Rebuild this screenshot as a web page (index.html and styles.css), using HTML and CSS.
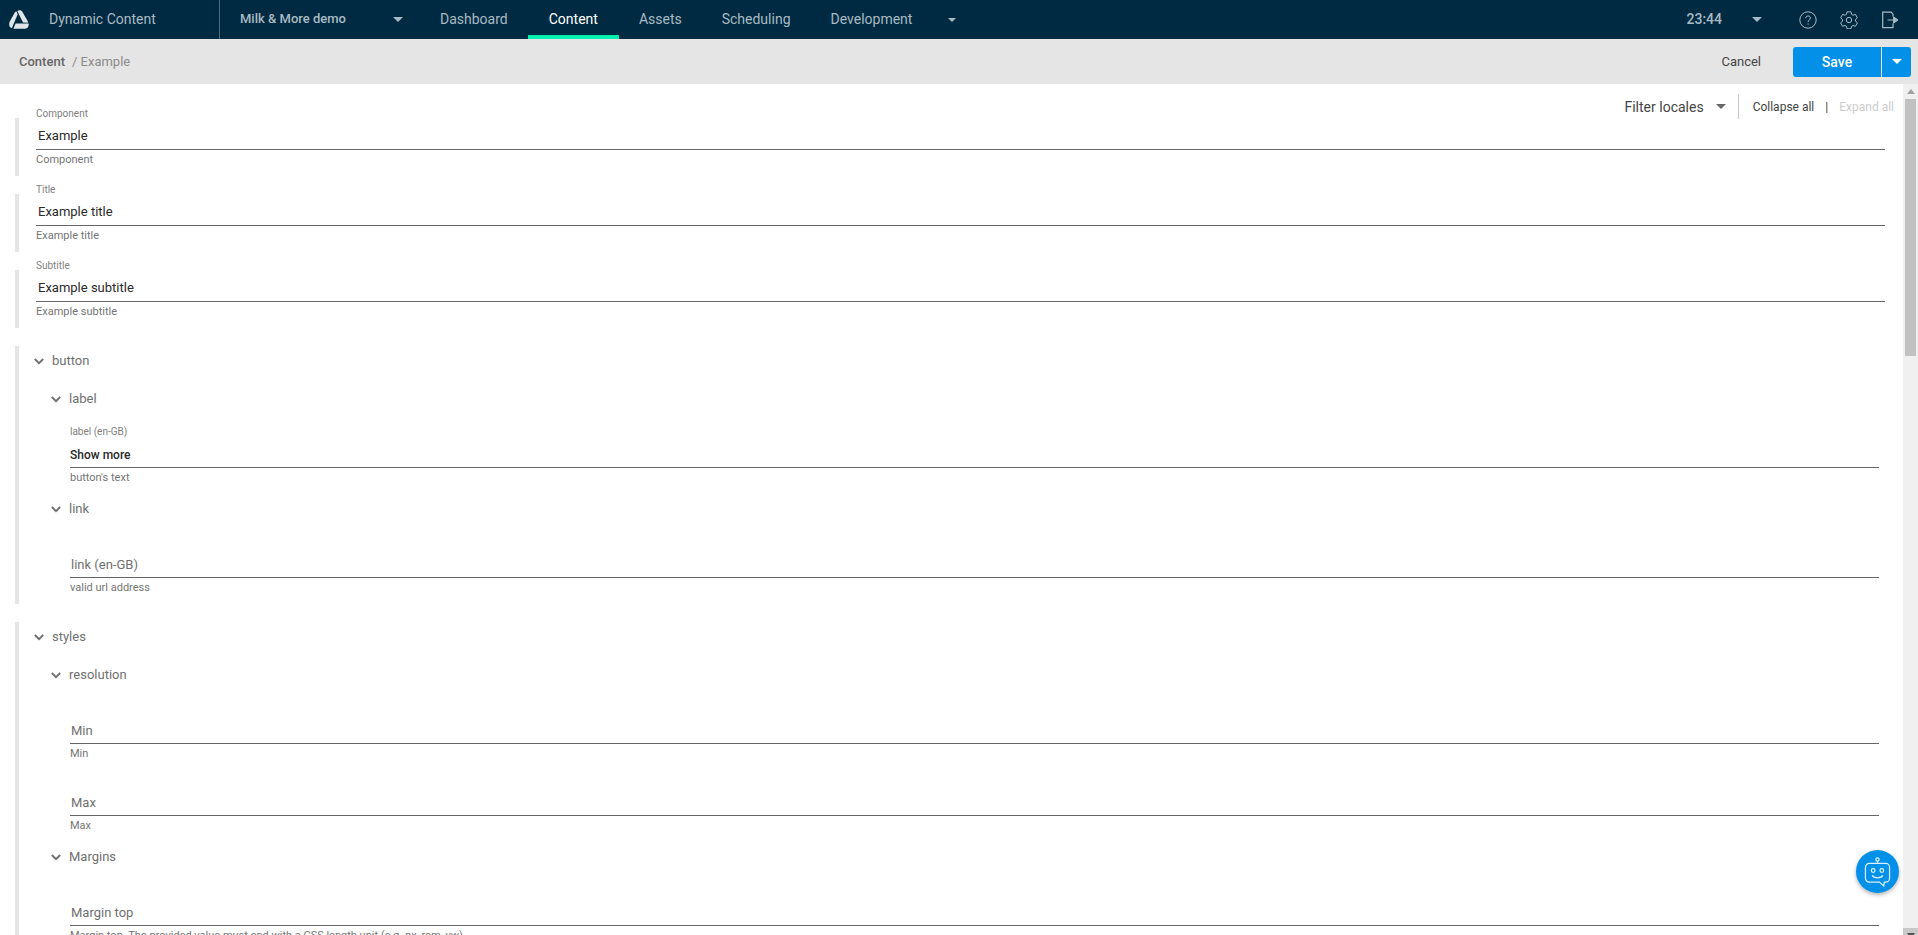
FILE: index.html
```html
<!DOCTYPE html>
<html lang="en">
<head>
<meta charset="utf-8">
<title>Dynamic Content</title>
<link rel="stylesheet" href="styles.css">
</head>
<body>
<svg class="defs" aria-hidden="true">
  <symbol id="chevron" viewBox="0 0 10 7"><path d="M.8 1 5 5.2 9.2 1" fill="none" stroke="currentColor" stroke-width="1.9"/></symbol>
  <symbol id="caret" viewBox="0 0 10 5"><path d="M0 0h10L5 5z" fill="currentColor"/></symbol>
</svg>
<header class="topbar">
  <a class="brand" href="#">
    <svg class="logo" viewBox="0 0 20 19" aria-hidden="true"><g fill="#dfe6ea">
      <path d="M5.600 2.800Q6.400 1.500 7.600 1.500L8.600 4.600 2.800 18.200C1 17.600 0 16 .2 13.700Q.3 12.600 .8 11.600z"/>
      <path d="M8.300 .9C10.200-.3 12.500 .2 13.500 1.900L19.200 11.900 18.600 12.700 14 12.500z"/>
      <path d="M6.600 13.600H19.800C20 16.600 18.600 18.600 16 18.800H4.400z"/></g></svg>
    <span>Dynamic Content</span>
  </a>
  <button class="hub" type="button"><span>Milk &amp; More demo</span><svg class="caret"><use href="#caret"/></svg></button>
  <nav class="nav">
    <a href="#">Dashboard</a>
    <a class="active" href="#" aria-current="page">Content</a>
    <a href="#">Assets</a>
    <a href="#">Scheduling</a>
    <a href="#">Development</a>
    <button class="more" type="button" aria-label="More"><svg class="caret small"><use href="#caret"/></svg></button>
  </nav>
  <div class="tools">
    <button class="clock" type="button"><span>23:44</span><svg class="caret"><use href="#caret"/></svg></button>
    <button type="button" aria-label="Help"><svg class="icon" viewBox="0 0 18 18"><circle cx="9" cy="9" r="8.200"/><path d="M6.700 7.200C6.700 4.100 11.400 4.200 11.400 7c0 1.900-2.300 1.900-2.300 4.100M9.100 12.500v1.200"/></svg></button>
    <button type="button" aria-label="Settings"><svg class="icon" viewBox="0 0 18 18"><circle cx="9" cy="9" r="2.700"/><path d="M7 .8h4l.5 2.500 1.500.9 2.400-.8 2 3.500-1.900 1.600v1.700l1.900 1.600-2 3.500-2.400-.8-1.500.9-.5 2.400H7l-.5-2.400-1.500-.9-2.400.8-2-3.500 1.900-1.600V8.500L.6 6.900l2-3.500 2.400.8 1.500-.9z"/></svg></button>
    <button type="button" aria-label="Log out"><svg class="icon" viewBox="0 0 18 18"><path d="M12 5.500V3.200L10.200 1.200H1.700V16.700H12V12.500M6.500 9H13" stroke-width="1.200"/><path d="M12.500 5.800 17 9l-4.500 3.200z" fill="currentColor"/></svg></button>
  </div>
</header>
<div class="subbar">
  <div class="crumbs"><a href="#">Content</a><span>/ Example</span></div>
  <button class="cancel" type="button">Cancel</button>
  <div class="split">
    <button class="save" type="button">Save</button>
    <button class="save-more" type="button" aria-label="More save options"><svg class="caret"><use href="#caret"/></svg></button>
  </div>
</div>
<div class="workspace">
  <main class="editor">
    <div class="filters">
      <button class="locales" type="button"><span>Filter locales</span><svg class="caret"><use href="#caret"/></svg></button>
      <button class="collapse" type="button">Collapse all</button>
      <span class="pipe">|</span>
      <button class="expand" type="button" disabled>Expand all</button>
    </div>
    <section class="block single">
      <div class="field"><label for="component">Component</label><input id="component" value="Example"><p>Component</p></div>
    </section>
    <section class="block single">
      <div class="field"><label for="title">Title</label><input id="title" value="Example title"><p>Example title</p></div>
    </section>
    <section class="block single">
      <div class="field"><label for="subtitle">Subtitle</label><input id="subtitle" value="Example subtitle"><p>Example subtitle</p></div>
    </section>
    <section class="block group">
      <div class="content">
        <button class="head" type="button"><svg class="chevron"><use href="#chevron"/></svg>button</button>
        <div class="nested">
          <button class="head" type="button"><svg class="chevron"><use href="#chevron"/></svg>label</button>
          <div class="field localized"><label for="label">label (en-GB)</label><input id="label" value="Show more"><p>button's text</p></div>
          <button class="head" type="button"><svg class="chevron"><use href="#chevron"/></svg>link</button>
          <div class="field"><label for="link"></label><input id="link" aria-label="link (en-GB)" placeholder="link (en-GB)"><p>valid url address</p></div>
        </div>
      </div>
    </section>
    <section class="block group">
      <div class="content">
        <button class="head" type="button"><svg class="chevron"><use href="#chevron"/></svg>styles</button>
        <div class="nested">
          <button class="head" type="button"><svg class="chevron"><use href="#chevron"/></svg>resolution</button>
          <div class="field"><label for="min"></label><input id="min" aria-label="Min" placeholder="Min"><p>Min</p></div>
          <div class="field"><label for="max"></label><input id="max" aria-label="Max" placeholder="Max"><p>Max</p></div>
          <button class="head" type="button"><svg class="chevron"><use href="#chevron"/></svg>Margins</button>
          <div class="field"><label for="mtop"></label><input id="mtop" aria-label="Margin top" placeholder="Margin top"><p>Margin top. The provided value must end with a CSS length unit (e.g. px, rem, vw)</p></div>
        </div>
      </div>
    </section>
  </main>
  <div class="scroll" aria-hidden="true">
    <div class="scroll-up"><svg viewBox="0 0 8 5"><path d="M0 5h8L4 0z" fill="#a0a0a0"/></svg></div>
    <div class="rail"><div class="thumb"></div></div>
    <div class="scroll-down"><svg viewBox="0 0 8 5"><path d="M0 0h8L4 5z" fill="#505050"/></svg></div>
  </div>
</div>
<button class="bot" type="button" aria-label="Chat">
  <svg viewBox="0 0 28 32" fill="none" stroke="#d9f0ff" stroke-width="1.300"><circle cx="14" cy="3.500" r="1.700"/><path d="M14 5.200v3M5.500 7.500h17a4 4 0 0 1 4 4v11.500a4 4 0 0 1-4 4h-1.500l-.5 4-4.500-4H5.500a4 4 0 0 1-4-4V11.500a4 4 0 0 1 4-4z"/><circle cx="9.500" cy="15" r="1.900"/><circle cx="18.500" cy="15" r="1.900"/><path d="M8.500 20c1.800 3.400 9.200 3.400 11 0"/></svg>
</button>
</body>
</html>
```
FILE: styles.css
```css
* { box-sizing: border-box; }
body {
  margin: 0;
  height: 100vh;
  display: flex;
  flex-direction: column;
  overflow: hidden;
  background: #fff;
  color: #444;
  font: 13px/18px Roboto, "Liberation Sans", sans-serif;
}
button { margin: 0; padding: 0; border: 0; background: none; color: inherit; font: inherit; cursor: pointer; }
a { color: inherit; text-decoration: none; }
.defs { position: absolute; width: 0; height: 0; }
.caret { display: block; width: 10px; height: 5px; }
.caret.small { width: 8px; height: 4px; }

.topbar { flex: none; display: flex; height: 39px; background: #002a41; color: #a8bac4; font-size: 14px; }
.brand { display: flex; align-items: center; gap: 20px; width: 220px; padding-left: 9px; border-right: 1px solid #4c6979; }
.brand span, .hub span, .clock span { padding-bottom: 2px; }
.logo { width: 20px; height: 19px; }
.hub { display: flex; align-items: center; justify-content: space-between; width: 200px; padding: 0 17px 0 20px; font-size: 13px; font-weight: 500; }
.nav { display: flex; }
.nav a { display: flex; align-items: center; padding: 0 20px 2px; }
.nav .active { color: #fff; padding: 0 21px 2px; box-shadow: inset 0 -4px #00f0ad; }
.more { padding: 0 16px; }
.tools { display: flex; align-items: center; gap: 23px; margin-left: auto; padding-right: 19px; }
.clock { display: flex; align-items: center; gap: 30px; margin-right: 14px; font-weight: 500; }
.icon { display: block; width: 18px; height: 18px; fill: none; stroke: currentColor; stroke-width: 1; }

.subbar { flex: none; display: flex; align-items: center; height: 45px; padding: 0 7px 0 19px; background: #e5e5e5; }
.crumbs { display: flex; gap: 7px; margin-right: auto; color: #8c8c8c; }
.crumbs a { color: #666; font-weight: 500; }
.cancel { margin-right: 32px; }
.split { display: flex; gap: 1px; height: 30px; color: #fff; }
.save { width: 88px; border-radius: 3px 0 0 3px; background: #0390e8; font-size: 14px; font-weight: 500; }
.save-more { display: flex; align-items: center; justify-content: center; width: 29px; border-radius: 0 3px 3px 0; background: #0390e8; }

.workspace { flex: 1; min-height: 0; display: flex; }
.editor { position: relative; flex: 1; min-width: 0; padding: 16px 18px 0 15px; overflow: hidden; }
.filters { position: absolute; top: 10px; right: 9px; z-index: 1; display: flex; align-items: center; height: 25px; font-size: 12px; }
.locales { display: flex; align-items: center; gap: 12px; height: 25px; margin-right: 14px; padding-right: 12px; border-right: 1px solid #c8c8c8; font-size: 14px; }
.locales .caret { color: #666; }
.pipe { margin: 0 11px; }
.expand { color: #ccc; }

.block { display: flex; gap: 17px; }
.block::before { content: ""; flex: none; width: 4px; background: #e5e5e5; }
.single::before { margin-top: 18px; }
.single .field { flex: 1; padding-bottom: 7px; }
.group { margin-top: 18px; padding-right: 6px; }
.content { flex: 1; min-width: 0; padding-bottom: 4px; }
.head { display: flex; align-items: center; gap: 8px; height: 38px; color: #707070; }
.content > .head { height: 30px; margin: 0 0 4px -2px; }
.nested .head { margin-left: 15px; }
.chevron { width: 10px; height: 7px; }

.field { display: flex; flex-direction: column; padding: 6px 0 3px; }
.field label { height: 16px; font-size: 10px; line-height: 16px; color: #808080; }
.field input { width: 100%; height: 28px; padding: 0 2px; border: 0; border-bottom: 1px solid #666; outline: 0; background: none; color: #2a2a2a; font: inherit; }
.field input::placeholder { color: #707070; opacity: 1; }
.field p { margin: 0; padding-top: 1px; font-size: 11px; line-height: 18px; color: #757575; white-space: nowrap; }
.nested .field { padding-left: 34px; }
.nested .field input { padding: 2px 1px 0; }
.nested .localized input { padding-left: 0; font-size: 12px; font-weight: 500; }

.scroll { flex: none; display: flex; flex-direction: column; width: 15px; background: #f0f0f0; }
.scroll svg { display: block; width: 8px; height: 5px; }
.scroll-up { display: flex; align-items: center; justify-content: center; height: 15px; }
.rail { flex: 1; padding: 0 2px; }
.thumb { height: 31%; background: #c1c1c1; }
.scroll-down { height: 7px; padding: 5px 0 0 4px; overflow: hidden; background: #c8c8c8; }

.bot { position: fixed; right: 19px; bottom: 42px; display: flex; align-items: center; justify-content: center; width: 43px; height: 43px; border-radius: 50%; background: #0390e8; box-shadow: 0 2px 4px rgba(0, 0, 0, .3); }
.bot svg { width: 27px; height: 31px; }
```
